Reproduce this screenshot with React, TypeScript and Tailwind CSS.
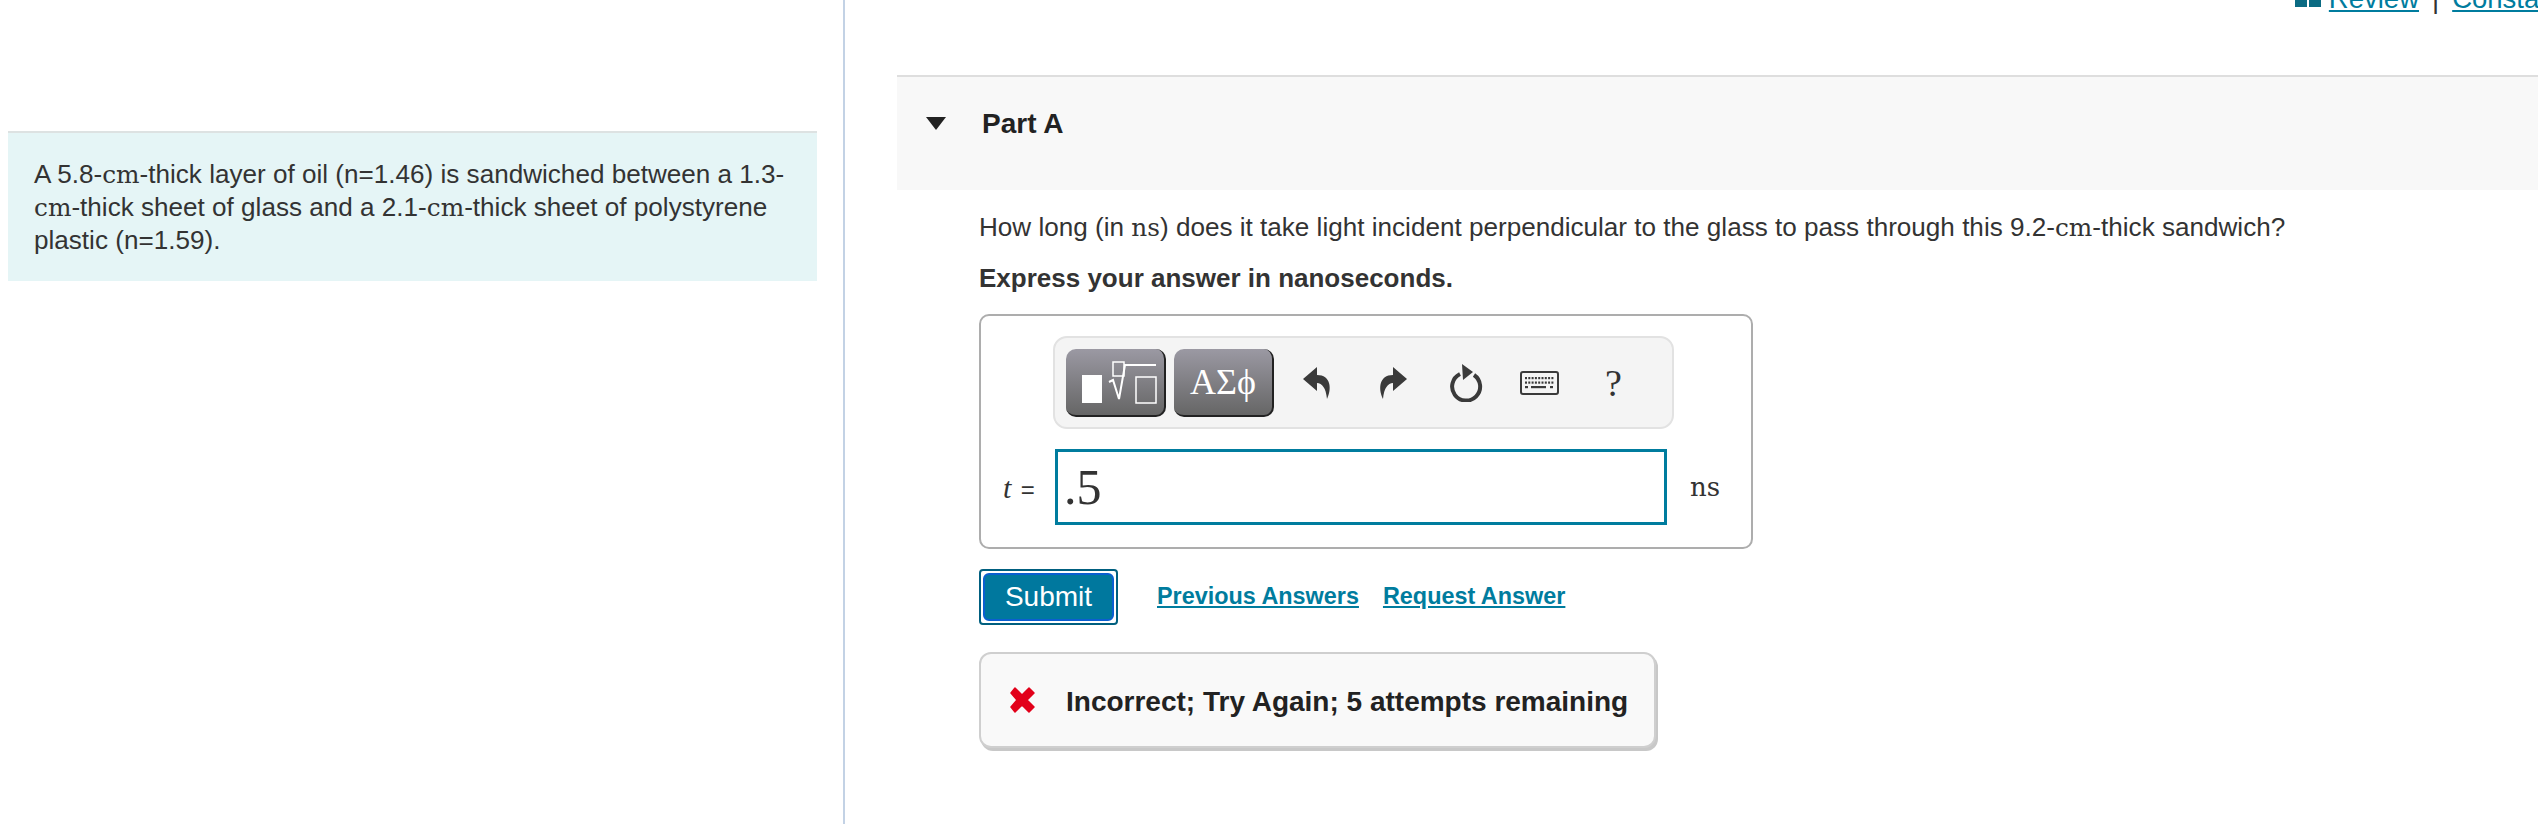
import React from 'react';

const sans = { fontFamily: '"Liberation Sans", Arial, sans-serif' };

function Unit({ children }: { children: React.ReactNode }) {
  return <span className="font-['DejaVu_Serif',serif] text-[0.95em]">{children}</span>;
}

function ReplyIcon({ flip }: { flip?: boolean }) {
  return (
    <svg width="30" height="34" viewBox="0 0 30 34" className={flip ? '-scale-x-100' : ''}>
      <path d="M15 1 L1 13 L15 25 L15 17 C20 17 24 22 25 33 C30 23 29 9 15 9 Z" fill="#3a3a3a" />
    </svg>
  );
}

function ResetIcon() {
  return (
    <svg width="36" height="38" viewBox="0 0 36 38">
      <path d="M13 10 A14 14 0 1 0 27 11" fill="none" stroke="#3a3a3a" strokeWidth="4" />
      <path d="M15 0 L26 8 L16 16 Z" fill="#3a3a3a" />
    </svg>
  );
}

function KeyboardIcon() {
  const keys = [];
  for (let r = 0; r < 2; r++) {
    for (let c = 0; c < 9; c++) {
      keys.push(<rect key={`${r}-${c}`} x={5 + c * 3.3} y={6 + r * 4.5} width="2" height="2.2" fill="#3a3a3a" />);
    }
  }
  return (
    <svg width="39" height="24" viewBox="0 0 39 24">
      <rect x="1" y="1" width="37" height="22" rx="2" fill="#f4f4f4" stroke="#3a3a3a" strokeWidth="2" />
      {keys}
      <rect x="5" y="15" width="3" height="2.2" fill="#3a3a3a" />
      <rect x="11" y="15" width="15" height="2.2" fill="#3a3a3a" />
      <rect x="30" y="15" width="3" height="2.2" fill="#3a3a3a" />
    </svg>
  );
}

function TemplateIcon() {
  return (
    <svg width="78" height="52" viewBox="0 0 78 52">
      <rect x="0" y="19" width="20" height="28" fill="#fff" />
      <rect x="31" y="6" width="11" height="14" fill="none" stroke="#fff" strokeWidth="1.5" />
      <path d="M27 26 L31 24 L37 43 L43 9 L74 9" fill="none" stroke="#fff" strokeWidth="2" />
      <rect x="54" y="21" width="20" height="26" fill="none" stroke="#fff" strokeWidth="1.5" />
    </svg>
  );
}

export default function App() {
  return (
    <div className="flex h-[824px] w-[2538px] overflow-hidden bg-white text-[#333]" style={sans}>
      <div className="w-[845px] shrink-0 border-r-2 border-[#c3d2e5] pl-2 pt-[131px]">
        <div className="w-[809px] border-t-2 border-[#dde2e2] bg-[#e5f5f6] pb-[24px] pl-[26px] pr-4 pt-[25px] text-[26.1px] leading-[33px]">
          A 5.8-<Unit>cm</Unit>-thick layer of oil (n=1.46) is sandwiched between a 1.3-<br />
          <Unit>cm</Unit>-thick sheet of glass and a 2.1-<Unit>cm</Unit>-thick sheet of polystyrene<br />
          plastic (n=1.59).
        </div>
      </div>

      <div className="min-w-0 flex-1">
        <div className="-mt-[16px] flex h-[91px] justify-end gap-[15px] whitespace-nowrap text-[27.5px] leading-[30px] text-[#007c9e]">
          <div className="mr-[-7px] mt-[15px] flex h-[8px] w-[26px] gap-[2px]">
            <div className="flex-1 bg-[#0b6b83]" />
            <div className="flex-1 bg-[#0b6b83]" />
          </div>
          <span className="-mr-[2px] underline">Review</span>
          <span className="text-[#333]">|</span>
          <span className="-mr-[38px] -ml-[2px] underline">Constants</span>
        </div>

        <div className="ml-[52px] flex h-[115px] items-start border-t-2 border-[#dedede] bg-[#f8f8f8] pl-[29px] pt-[30px]">
          <svg width="20" height="13" viewBox="0 0 20 13" className="mt-[10px]">
            <path d="M0 0 H20 L10 13 Z" fill="#222" />
          </svg>
          <span className="ml-[36px] text-[28px] font-bold leading-[34px] text-[#222]">Part A</span>
        </div>

        <div className="ml-[134px] pt-[21px]">
          <p className="text-[26.1px] leading-[32px]">
            How long (in <Unit>ns</Unit>) does it take light incident perpendicular to the glass to pass through this 9.2-<Unit>cm</Unit>-thick sandwich?
          </p>
          <p className="mt-[18px] text-[26px] font-bold leading-[32px]">Express your answer in nanoseconds.</p>

          <div className="mt-[20px] h-[235px] w-[774px] rounded-[10px] border-2 border-[#adadad] pl-[72px] pt-[21px]">
            <div className="-mt-[1px] flex h-[93px] w-[621px] items-center rounded-[14px] border-2 border-[#e2e2e2] bg-[#f4f4f4] pl-[11px]">
              <div className="flex h-[68px] w-[100px] items-center rounded-[10px] border-b-2 border-r-2 border-[#222] bg-gradient-to-b from-[#9b99a3] to-[#666] pl-[16px]">
                <TemplateIcon />
              </div>
              <div className="ml-2 flex h-[68px] w-[100px] items-center justify-center rounded-[10px] border-b-2 border-r-2 border-[#222] bg-gradient-to-b from-[#9b99a3] to-[#666] font-['Liberation_Serif',serif] text-[36px] text-white">
                ΑΣϕ
              </div>
              <div className="ml-[28px] flex items-center">
                <ReplyIcon />
                <div className="ml-[46px]"><ReplyIcon flip /></div>
                <div className="ml-[39px]"><ResetIcon /></div>
                <div className="ml-[37px]"><KeyboardIcon /></div>
                <span className="ml-[46px] font-['Liberation_Serif',serif] text-[38px] leading-none text-[#333]">?</span>
              </div>
            </div>

            <div className="-ml-[50px] mt-[20px] flex items-center">
              <span className="w-[52px] shrink-0 whitespace-nowrap font-['Liberation_Serif',serif] text-[30px]">
                <i>t</i> <span className="ml-[2px] font-['Liberation_Sans',sans-serif] text-[24px]">=</span>
              </span>
              <div className="flex h-[76px] w-[612px] items-center border-[3px] border-[#007c9e] pl-[6px] font-['Liberation_Serif',serif] text-[50px] text-[#333]">
                .5
              </div>
              <span className="ml-[23px] font-['DejaVu_Serif',serif] text-[26px]">ns</span>
            </div>
          </div>

          <div className="mt-[20px] flex items-center">
            <button className="flex h-[56px] w-[139px] items-center justify-center rounded-[4px] border-2 border-[#005f7f] bg-white p-0">
              <span className="flex h-[48px] w-[131px] items-center justify-center rounded-[6px] border-2 border-[#0a5fd0] bg-[#00789e] text-[28px] text-white">
                Submit
              </span>
            </button>
            <a className="ml-[39px] text-[23.4px] font-bold text-[#007c9e] underline">Previous Answers</a>
            <a className="ml-[24px] text-[23.4px] font-bold text-[#007c9e] underline">Request Answer</a>
          </div>

          <div className="mt-[27px] flex h-[96px] w-[677px] items-center rounded-[12px] border-2 border-[#cfcfcf] bg-[#f9f9f9] pl-[27px] shadow-[2px_3px_0_#c8c8c8]">
            <svg width="28" height="28" viewBox="0 0 28 28">
              <path d="M3 7 L7 2 L14 9 L21 2 L26 7 L19 14 L26 21 L21 26 L14 19 L7 26 L3 21 L9 14 Z" fill="#e2001a" stroke="#e2001a" strokeWidth="1.5" strokeLinejoin="round" />
            </svg>
            <span className="ml-[30px] pt-[4px] text-[28px] font-bold text-[#222]">Incorrect; Try Again; 5 attempts remaining</span>
          </div>
        </div>
      </div>
    </div>
  );
}
